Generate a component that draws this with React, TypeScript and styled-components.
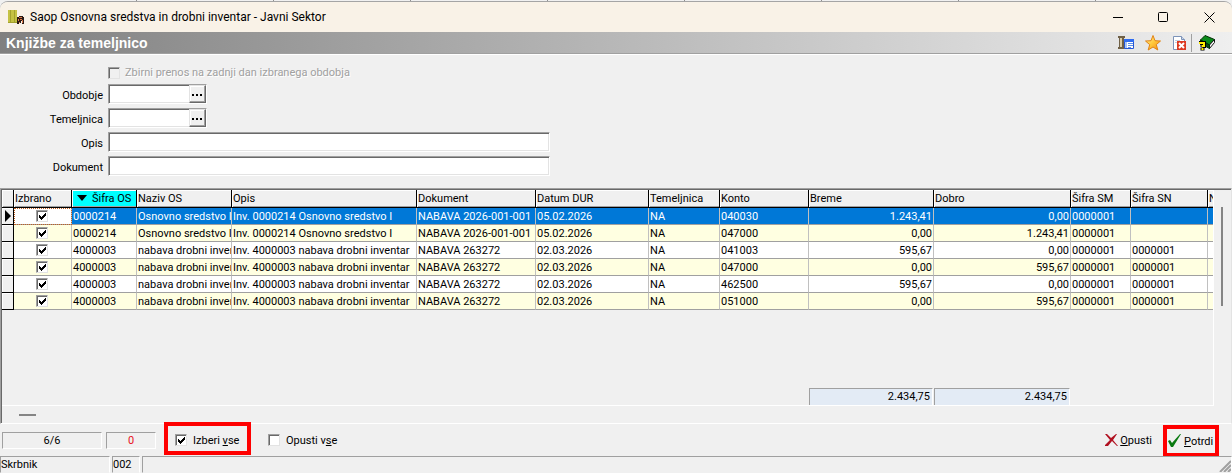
import React from 'react';
import styled, { createGlobalStyle, css } from 'styled-components';

const GlobalStyle = createGlobalStyle`
  *, *::before, *::after { box-sizing: border-box; }
  body {
    margin: 0;
    background: #f1f1f1;
    color: #000;
    font-family: Roboto, "Liberation Sans", sans-serif;
    font-size: 11px;
    line-height: 16px;
  }
  input, button, table { font: inherit; color: inherit; }
`;

const Desktop = styled.div`
  display: flex;
  flex-direction: column;
  min-height: 100vh;
`;

const BackdropStrip = styled.div`
  height: 1px;
  flex: none;
  background: repeating-linear-gradient(90deg, #f1f1f1 0 136px, #909090 136px 137px);
`;

const Window = styled.div`
  flex: 1;
  display: flex;
  flex-direction: column;
  min-width: 0;
  overflow: hidden;
  background: #f0f0f0;
  border-top: 1px solid #a5a5a5;
  border-radius: 8px 8px 0 0;
`;

const TitleBar = styled.header`
  display: flex;
  align-items: center;
  height: 30px;
  padding: 0 17px 0 8px;
  background: #f9f2e7;
`;

const WindowTitle = styled.span`
  flex: 1;
  padding-left: 6px;
  font-size: 12px;
`;

const WindowButtons = styled.div`
  display: flex;
  gap: 35px;
`;

const IconButton = styled.button`
  display: grid;
  place-items: center;
  padding: 0;
  border: 0;
  background: none;
`;

const Caption = styled.div`
  display: flex;
  align-items: center;
  height: 22px;
  padding: 0 16px 0 6px;
  background: linear-gradient(90deg, #808080, #efefef);
  border-bottom: 1px solid #a0a0a0;
  box-shadow: 0 1px #fff;
`;

const CaptionText = styled.h1`
  flex: 1;
  margin: 0;
  color: #fff;
  font: bold 14px/20px "Liberation Sans", Arial, sans-serif;
`;

const Tools = styled.div`
  display: flex;
  align-items: center;
  gap: 11px;
`;

const ToolSeparated = styled.div`
  height: 18px;
  display: flex;
  align-items: center;
  margin-left: -8px;
  padding-left: 7px;
  border-left: 1px solid #a0a0a0;
`;

const Form = styled.form`
  display: flex;
  flex-direction: column;
  gap: 4px;
  padding: 12px 8px 12px 0;
`;

const ZbirniRow = styled.div`
  display: flex;
  height: 14px;
  padding-left: 108px;
`;

const Field = styled.div`
  display: grid;
  grid-template-columns: 103px minmax(0, 1fr);
  column-gap: 5px;
  align-items: end;
`;

const FieldLabel = styled.label`
  text-align: right;
`;

const Sunken = styled.div<{ $short?: boolean }>`
  display: flex;
  width: 100%;
  max-width: ${(p) => (p.$short ? 99 : 442)}px;
  height: 20px;
  background: #fff;
  border: 1px solid;
  border-color: #a0a0a0 #fff #fff #a0a0a0;
  box-shadow: inset 1px 1px #696969, inset -1px -1px #e3e3e3;
`;

const TextInput = styled.input`
  flex: 1;
  min-width: 0;
  padding: 1px 3px;
  border: 0;
  outline: 0;
  background: none;
`;

const DotsButton = styled.button`
  display: grid;
  place-items: center;
  width: 17px;
  height: 18px;
  padding: 1px 1px 0 0;
  background: #f0f0f0;
  border: 1px solid;
  border-color: #e3e3e3 #696969 #696969 #e3e3e3;
  box-shadow: inset -1px -1px #a0a0a0, inset 1px 1px #fff;
`;

const CheckLabel = styled.label<{ $disabled?: boolean }>`
  display: flex;
  align-items: center;
  gap: 5px;
  white-space: nowrap;
  ${(p) => p.$disabled && css`
    color: #a0a0a0;
    text-shadow: 1px 1px #fff;
  `}
`;

const ActionCheck = styled(CheckLabel)`
  gap: 6px;
`;

const ActionText = styled.span`
  padding-top: 2px;
`;

const CheckFace = styled.span`
  display: inline-grid;
  width: 12px;
  height: 12px;
  & > * { grid-area: 1 / 1; }
  & > svg { pointer-events: none; }
`;

const CheckInput = styled.input`
  appearance: none;
  width: 12px;
  height: 12px;
  margin: 0;
  background: #fff;
  border: 1px solid;
  border-color: #a0a0a0 #e3e3e3 #e3e3e3 #a0a0a0;
  box-shadow: inset 1px 1px #696969;
  &:disabled { background: #f0f0f0; }
`;

const GridFrame = styled.section`
  flex: 1;
  display: grid;
  grid-template-columns: minmax(0, 1fr) 17px;
  grid-template-rows: minmax(216px, 1fr) 17px;
  border-top: 1px solid #a0a0a0;
  border-left: 1px solid #a0a0a0;
  border-bottom: 1px solid #fff;
  border-right: 1px solid #e3e3e3;
  box-shadow: inset 1px 1px #696969;
  padding: 1px 0 0 1px;
`;

const GridView = styled.div`
  display: flex;
  flex-direction: column;
  justify-content: space-between;
  overflow: hidden;
  border-right: 1px solid #fff;
  border-bottom: 1px solid #fff;
`;

const DataTable = styled.table`
  table-layout: fixed;
  width: 100%;
  border-collapse: separate;
  border-spacing: 0;
  background: #fff;
`;

const HeadCell = styled.th<{ $sorted?: boolean }>`
  height: 18px;
  padding: 1px 0 0 1px;
  overflow: hidden;
  white-space: nowrap;
  text-align: left;
  font-weight: 400;
  line-height: 16px;
  background: ${(p) => (p.$sorted ? '#00ffff' : '#f0f0f0')};
  border-right: 1px solid #000;
  border-bottom: 1px solid #000;
  box-shadow: inset 1px 1px #fff, inset 0 -1px #a0a0a0;
  &:last-child { border-right: 0; }
`;

const SortMark = styled.svg`
  margin: 0 5px 1px 4px;
`;

const Row = styled.tr<{ $selected: boolean; $striped: boolean }>`
  background: ${(p) => (p.$selected ? '#0078d7' : p.$striped ? '#ffffe1' : '#fff')};
  color: ${(p) => (p.$selected ? '#fff' : '#000')};
`;

const Cell = styled.td<{ $right?: boolean }>`
  height: 17px;
  padding: 2px 1px 0;
  overflow: hidden;
  white-space: nowrap;
  line-height: 14px;
  text-align: ${(p) => (p.$right ? 'right' : 'left')};
  border-right: 1px solid #c0c0c0;
  border-bottom: 1px solid #a0a0a0;
  &:last-child { border-right: 0; }
`;

const MarkerCell = styled(Cell)`
  background: #f0f0f0;
  padding: 0 0 0 2px;
  border-color: #000;
  box-shadow: inset 1px 1px #fff;
  & > svg { display: block; }
`;

const CheckCell = styled(Cell)<{ $focused: boolean }>`
  padding: 0 3px 0 1px;
  line-height: 0;
  text-align: center;
  ${(p) => p.$focused && css`
    background: #fff;
    outline: 1px dotted #c06020;
    outline-offset: -1px;
  `}
`;

const SumRow = styled.div`
  display: grid;
  height: 17px;
`;

const Sum = styled.output<{ $column: number }>`
  grid-column: ${(p) => p.$column};
  grid-row: 1;
  margin-right: 1px;
  padding-right: 2px;
  text-align: right;
  line-height: 16px;
  background: #e3ebf5;
  border: 1px solid;
  border-color: #a0a0a0 #fff #fff #a0a0a0;
`;

const VerticalTrack = styled.div`
  padding: 17px 0 0 7px;
`;

const VerticalThumb = styled.div`
  width: 2px;
  height: 99px;
  background: #858585;
`;

const HorizontalTrack = styled.div`
  grid-column: 1 / -1;
  padding: 8px 0 0 17px;
`;

const HorizontalThumb = styled.div`
  width: 17px;
  height: 2px;
  background: #858585;
`;

const ActionBar = styled.div`
  display: flex;
  align-items: center;
  height: 32px;
  padding: 0 13px 0 2px;
`;

const Counter = styled.output<{ $wide?: boolean }>`
  width: ${(p) => (p.$wide ? 100 : 50)}px;
  height: 17px;
  margin-right: 4px;
  text-align: center;
  color: ${(p) => (p.$wide ? '#000' : '#e81123')};
  border: 1px solid;
  border-color: #a0a0a0 #fff #fff #a0a0a0;
`;

const Highlight = styled.div`
  display: flex;
  align-items: center;
  align-self: flex-start;
  border: 4px solid #ff0000;
`;

const SelectHighlight = styled(Highlight)`
  width: 87px;
  height: 33px;
  margin: -2px 17px 0 4px;
  padding: 2px 0 0 7px;
`;

const ConfirmHighlight = styled(Highlight)`
  width: 56px;
  height: 32px;
  margin: 1px 0 0 11px;
  padding-left: 1px;
`;

const ActionButton = styled.button`
  display: flex;
  align-items: center;
  gap: 2px;
  padding: 0;
  border: 0;
  background: none;
  line-height: 16px;
`;

const Spacer = styled.div`
  flex: 1;
`;

const StatusBar = styled.footer`
  display: flex;
  gap: 2px;
  height: 17px;
`;

const StatusCell = styled.div<{ $width?: number }>`
  flex: ${(p) => (p.$width ? `0 0 ${p.$width}px` : '1')};
  display: flex;
  justify-content: flex-end;
  align-items: flex-end;
  border: 1px solid;
  border-color: #a0a0a0 #fff transparent #a0a0a0;
`;

const StatusText = styled.span`
  flex: 1;
  line-height: 14px;
`;

const Tick = () => (
  <svg width="12" height="12" shapeRendering="crispEdges">
    <path d="M3 5h1v3h-1zM4 6h1v3h-1zM5 7h1v3h-1zM6 6h1v3h-1zM7 5h1v3h-1zM8 4h1v3h-1zM9 3h1v3h-1z" />
  </svg>
);

const AppIcon = () => (
  <svg width="16" height="16" shapeRendering="crispEdges">
    <path fill="#c5c243" d="M0 1h9v13H0z" />
    <path fill="#a3a12e" d="M2 1h1v13H2zM6 1h1v13H6zM0 13h9v1H0z" />
    <path fill="#2a1a14" d="M9 8h2v-1h4v1h1v7h-2v-3h-1v2h-2v1H9z" />
    <path fill="#e07b4a" d="M11 8h3v1h-3zM10 10h1v2h-1zM12 10h2v1h-2zM11 13h1v1h-1zM14 11h1v3h-1z" />
  </svg>
);

const SpoolIcon = () => (
  <svg width="16" height="16">
    <path fill="#6f6047" d="M0 1h7v2H6v9h1v2H0v-2h1V3H0z" />
    <path fill="#d9cba7" d="M2 3h2v9H2z" />
    <path fill="#fff" stroke="#2456d6" d="M6.500 4.500h9v9h-9z" />
    <path fill="#2f6cf0" d="M6 4h10v3H6z" />
    <path fill="#a8c4f5" d="M7 7h2v6H7z" />
    <path stroke="#5f8fe8" d="M10 8.500h5M10 10.500h5M10 12.500h3" />
  </svg>
);

const StarIcon = () => (
  <svg width="16" height="16">
    <defs>
      <linearGradient id="star" x1="0" y1="0" x2="1" y2="1">
        <stop offset="0" stopColor="#fff3a0" />
        <stop offset=".5" stopColor="#ffc83a" />
        <stop offset="1" stopColor="#f58a10" />
      </linearGradient>
    </defs>
    <path fill="url(#star)" stroke="#e08214" strokeLinejoin="round" d="M8 .5l2 5.200 5.500.3-4.200 3.600 1.500 5.400L8 12l-4.800 3 1.500-5.400L.5 6l5.500-.3z" />
  </svg>
);

const DeletePageIcon = () => (
  <svg width="16" height="16">
    <path fill="#fff" stroke="#7c93b8" d="M1.500 1.500h8l3 3v10h-11z" />
    <path fill="#c9d6ea" stroke="#7c93b8" d="M9.500 1.500v3h3" />
    <path stroke="#c3cee0" d="M3 5.500h5M3 7.500h2" />
    <path fill="#dd3a22" d="M5 6h9v9H5z" />
    <path stroke="#fff" strokeWidth="2" d="M7 8l5 5M12 8l-5 5" />
  </svg>
);

const BookIcon = () => (
  <svg width="17" height="16">
    <path fill="#0a8a1a" stroke="#022c06" d="M1.500 5L6 .5l9.500 4-5 5.500z" />
    <path fill="#fff" stroke="#111" d="M10.500 10l5-5.500v3l-5 6z" />
    <path fill="#064d10" stroke="#022c06" d="M1.500 5l9 5v3.500l-9-5z" />
    <path stroke="#000" strokeWidth="4" fill="none" d="M1 9V8h4v3H3.500v1.500M3.500 13v2.500" />
    <path stroke="#ffee00" strokeWidth="2" fill="none" d="M1 9V8h4v3H3.500v1M3.500 13v2" />
  </svg>
);

const CrossIcon = () => (
  <svg width="13" height="13">
    <path fill="#b01020" d="M0 0h2l4 4 5-4h1L8 6l5 6h-1L7 7l-4 5H0v-1l5-5z" />
  </svg>
);

const CheckIcon = () => (
  <svg width="14" height="14">
    <path fill="#0a7a12" d="M0 7l2-1 2 3 8-9h1L5 13H3z" />
  </svg>
);

interface Column {
  title: string;
  width?: number;
  right?: boolean;
}

const columns: Column[] = [
  { title: 'Šifra OS', width: 65 },
  { title: 'Naziv OS', width: 95 },
  { title: 'Opis', width: 185 },
  { title: 'Dokument', width: 119 },
  { title: 'Datum DUR', width: 113 },
  { title: 'Temeljnica', width: 71 },
  { title: 'Konto', width: 89 },
  { title: 'Breme', width: 125, right: true },
  { title: 'Dobro', width: 137, right: true },
  { title: 'Šifra SM', width: 60 },
  { title: 'Šifra SN', width: 77 },
  { title: 'N' },
];

const MARKER_WIDTH = 12;
const CHECK_WIDTH = 58;

const gridTemplate = [MARKER_WIDTH, CHECK_WIDTH, ...columns.map((c) => c.width)]
  .map((w) => (w ? `${w}px` : '1fr'))
  .join(' ');

const osnovno = ['0000214', 'Osnovno sredstvo I', 'Inv. 0000214 Osnovno sredstvo I', 'NABAVA 2026-001-001', '05.02.2026', 'NA'];
const drobni = ['4000003', 'nabava drobni inventar', 'Inv. 4000003 nabava drobni inventar', 'NABAVA 263272', '02.03.2026', 'NA'];

const rows: string[][] = [
  [...osnovno, '040030', '1.243,41', '0,00', '0000001', '', ''],
  [...osnovno, '047000', '0,00', '1.243,41', '0000001', '', ''],
  [...drobni, '041003', '595,67', '0,00', '0000001', '0000001', ''],
  [...drobni, '047000', '0,00', '595,67', '0000001', '0000001', ''],
  [...drobni, '462500', '595,67', '0,00', '0000001', '0000001', ''],
  [...drobni, '051000', '0,00', '595,67', '0000001', '0000001', ''],
];

interface CheckProps {
  checked?: boolean;
  disabled?: boolean;
  label?: string;
}

const Check = ({ checked = false, disabled, label }: CheckProps) => {
  const [on, setOn] = React.useState(checked);
  return (
    <CheckFace>
      <CheckInput
        type="checkbox"
        aria-label={label}
        checked={on}
        disabled={disabled}
        onChange={(e) => setOn(e.target.checked)}
      />
      {on && <Tick />}
    </CheckFace>
  );
};

interface FormFieldProps {
  id: string;
  label: string;
  picker?: boolean;
}

const FormField = ({ id, label, picker }: FormFieldProps) => (
  <Field>
    <FieldLabel htmlFor={id}>{label}</FieldLabel>
    <Sunken $short={picker}>
      <TextInput id={id} type="text" />
      {picker && (
        <DotsButton type="button" aria-label={`${label} – izbor`}>
          <svg width="10" height="2" shapeRendering="crispEdges">
            <path d="M0 0h2v2H0zM4 0h2v2H4zM8 0h2v2H8z" />
          </svg>
        </DotsButton>
      )}
    </Sunken>
  </Field>
);

export default function App() {
  return (
    <>
      <GlobalStyle />
      <Desktop>
        <BackdropStrip />
        <Window>
          <TitleBar>
            <AppIcon />
            <WindowTitle>Saop Osnovna sredstva in drobni inventar - Javni Sektor</WindowTitle>
            <WindowButtons>
              <IconButton aria-label="Pomanjšaj">
                <svg width="10" height="11"><path stroke="#000" d="M0 5.500h10" /></svg>
              </IconButton>
              <IconButton aria-label="Povečaj">
                <svg width="11" height="11"><rect x=".5" y=".5" width="9" height="9" rx="1" fill="none" stroke="#000" /></svg>
              </IconButton>
              <IconButton aria-label="Zapri">
                <svg width="11" height="11"><path stroke="#000" d="M.5.5l10 10M10.500.5l-10 10" /></svg>
              </IconButton>
            </WindowButtons>
          </TitleBar>

          <Caption>
            <CaptionText>Knjižbe za temeljnico</CaptionText>
            <Tools>
              <IconButton aria-label="Pogled"><SpoolIcon /></IconButton>
              <IconButton aria-label="Priljubljene"><StarIcon /></IconButton>
              <IconButton aria-label="Zapri dokument"><DeletePageIcon /></IconButton>
              <ToolSeparated>
                <IconButton aria-label="Pomoč"><BookIcon /></IconButton>
              </ToolSeparated>
            </Tools>
          </Caption>

          <Form>
            <ZbirniRow>
              <CheckLabel $disabled>
                <Check disabled />
                Zbirni prenos na zadnji dan izbranega obdobja
              </CheckLabel>
            </ZbirniRow>
            <FormField id="obdobje" label="Obdobje" picker />
            <FormField id="temeljnica" label="Temeljnica" picker />
            <FormField id="opis" label="Opis" />
            <FormField id="dokument" label="Dokument" />
          </Form>

          <GridFrame>
            <GridView>
              <DataTable>
                <colgroup>
                  <col style={{ width: MARKER_WIDTH }} />
                  <col style={{ width: CHECK_WIDTH }} />
                  {columns.map((c) => (
                    <col key={c.title} style={{ width: c.width }} />
                  ))}
                </colgroup>
                <thead>
                  <tr>
                    <HeadCell />
                    <HeadCell>Izbrano</HeadCell>
                    {columns.map((c, i) => (
                      <HeadCell key={c.title} $sorted={i === 0}>
                        {i === 0 && (
                          <SortMark width="10" height="6"><path d="M0 0h10L5 6z" /></SortMark>
                        )}
                        {c.title}
                      </HeadCell>
                    ))}
                  </tr>
                </thead>
                <tbody>
                  {rows.map((row, r) => (
                    <Row key={r} $selected={r === 0} $striped={r % 2 === 1}>
                      <MarkerCell>
                        {r === 0 && (
                          <svg width="7" height="12"><path d="M1 0l6 6-6 6z" /></svg>
                        )}
                      </MarkerCell>
                      <CheckCell $focused={r === 0}>
                        <Check checked label={`Izbrano ${r + 1}`} />
                      </CheckCell>
                      {row.map((text, i) => (
                        <Cell key={i} $right={columns[i].right}>{text}</Cell>
                      ))}
                    </Row>
                  ))}
                </tbody>
              </DataTable>
              <SumRow style={{ gridTemplateColumns: gridTemplate }}>
                <Sum $column={10}>2.434,75</Sum>
                <Sum $column={11}>2.434,75</Sum>
              </SumRow>
            </GridView>
            <VerticalTrack><VerticalThumb /></VerticalTrack>
            <HorizontalTrack><HorizontalThumb /></HorizontalTrack>
          </GridFrame>

          <ActionBar>
            <Counter $wide>6/6</Counter>
            <Counter>0</Counter>
            <SelectHighlight>
              <ActionCheck>
                <Check checked />
                <ActionText>Izberi <u>v</u>se</ActionText>
              </ActionCheck>
            </SelectHighlight>
            <ActionCheck>
              <Check />
              <ActionText>Opusti v<u>s</u>e</ActionText>
            </ActionCheck>
            <Spacer />
            <ActionButton type="button">
              <CrossIcon />
              <ActionText><u>O</u>pusti</ActionText>
            </ActionButton>
            <ConfirmHighlight>
              <ActionButton type="button">
                <CheckIcon />
                <ActionText><u>P</u>otrdi</ActionText>
              </ActionButton>
            </ConfirmHighlight>
          </ActionBar>

          <StatusBar>
            <StatusCell $width={110}><StatusText>Skrbnik</StatusText></StatusCell>
            <StatusCell $width={28}><StatusText>002</StatusText></StatusCell>
            <StatusCell>
              <svg width="12" height="12">
                <path stroke="#a0a0a0" strokeWidth="2" d="M1 12L12 1M5 12l7-7M9 12l3-3" />
              </svg>
            </StatusCell>
          </StatusBar>
        </Window>
      </Desktop>
    </>
  );
}
